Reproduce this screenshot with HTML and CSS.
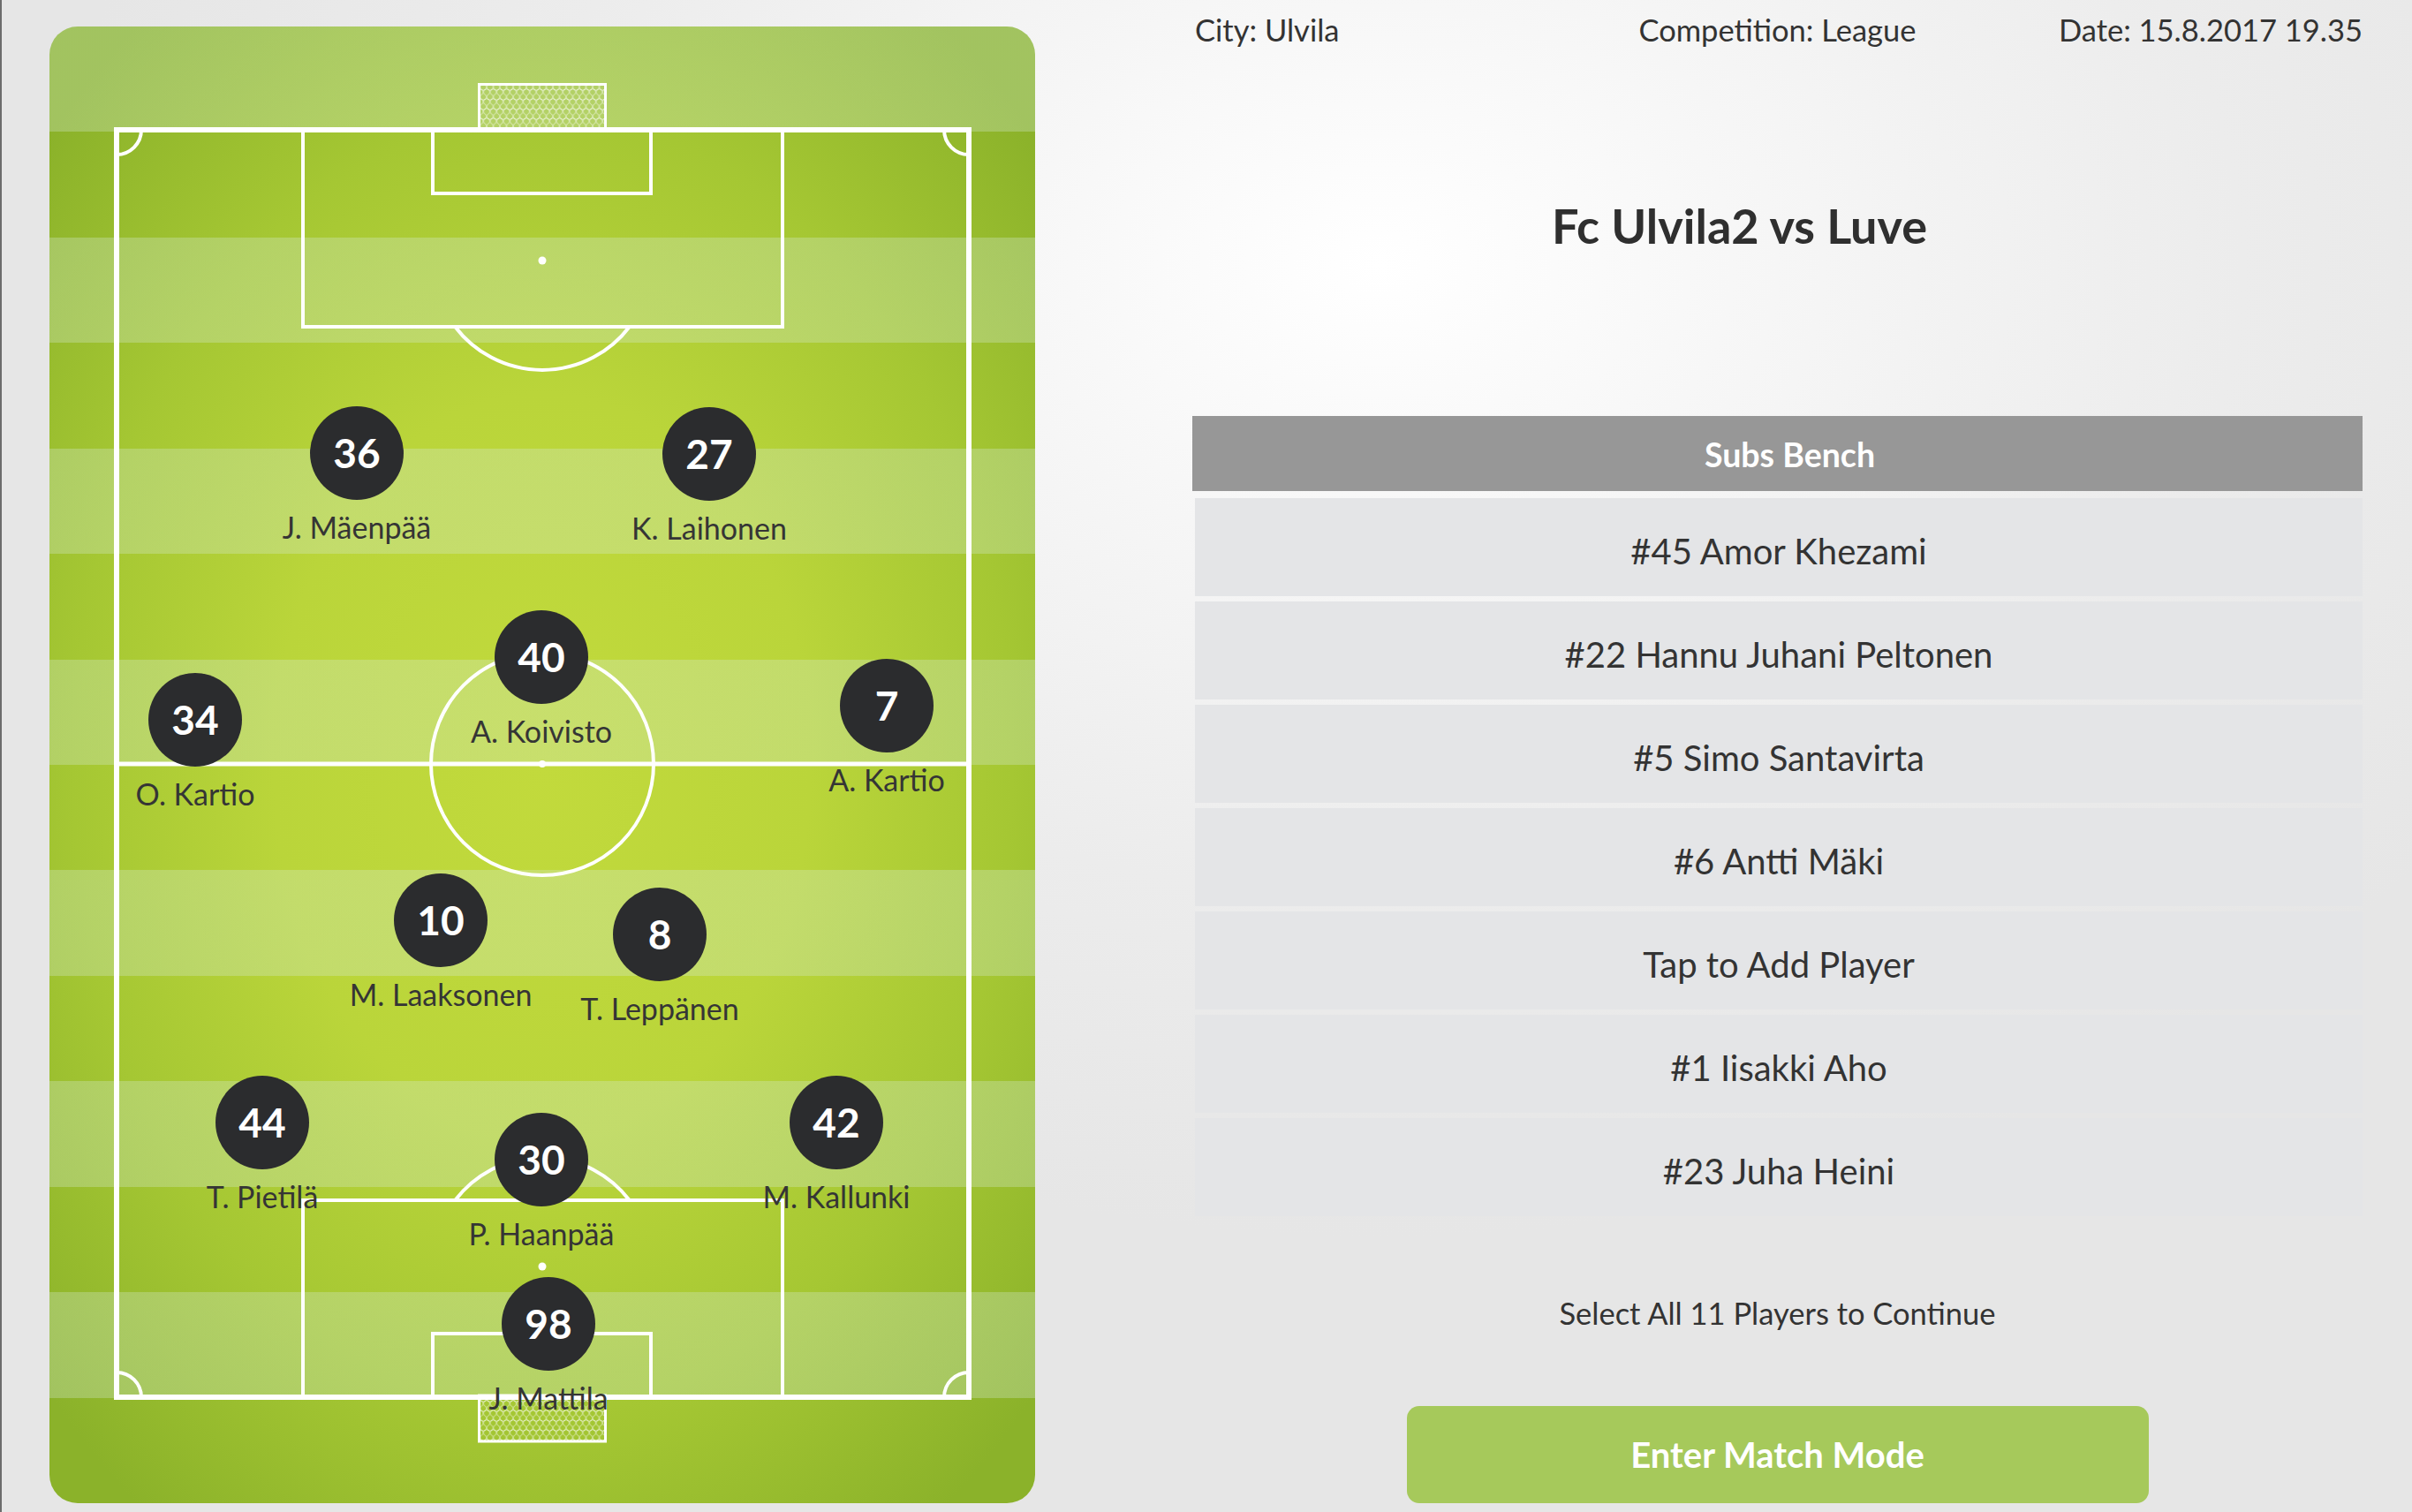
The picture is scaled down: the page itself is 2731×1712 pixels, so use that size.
FILE: index.html
```html
<!DOCTYPE html>
<html lang="fi">
<head>
<meta charset="utf-8">
<title>Lineup</title>
<link rel="stylesheet" href="styles.css">
</head>
<body>
<div class="screen">
  <section class="pitch">
    <svg class="pitch-lines" viewBox="0 0 1116 1672" width="1116" height="1672">
      <defs>
        <pattern id="net" width="7.5" height="11" patternUnits="userSpaceOnUse">
          <ellipse cx="3.75" cy="2.75" rx="3.4" ry="3.6"/>
          <ellipse cx="0" cy="8.25" rx="3.4" ry="3.6"/>
          <ellipse cx="7.5" cy="8.25" rx="3.4" ry="3.6"/>
        </pattern>
      </defs>
      <rect class="net" x="486.5" y="65.5" width="143" height="52"/>
      <rect class="net" x="486.5" y="1550" width="143" height="52"/>
      <g class="ln">
        <rect x="76" y="117" width="965" height="1435" class="outer"/>
        <line x1="76" y1="835" x2="1041" y2="835" class="half"/>
        <circle cx="558" cy="835" r="126"/>
        <path d="M287 117 V340 H830 V117"/>
        <path d="M434 117 V189 H681 V117"/>
        <path d="M459.3 340 A124 124 0 0 0 656.7 340"/>
        <path d="M287 1552 V1329 H830 V1552"/>
        <path d="M434 1552 V1480 H681 V1552"/>
        <path d="M459.3 1329 A124 124 0 0 1 656.7 1329"/>
        <path d="M76 145 A28 28 0 0 0 104 117"/>
        <path d="M1013 117 A28 28 0 0 0 1041 145"/>
        <path d="M76 1524 A28 28 0 0 1 104 1552"/>
        <path d="M1013 1552 A28 28 0 0 1 1041 1524"/>
      </g>
      <g class="spot">
        <circle cx="558" cy="835" r="4"/>
        <circle cx="558" cy="265" r="4.5"/>
        <circle cx="558" cy="1404" r="4.5"/>
      </g>
    </svg>

    <div class="player" style="--x:348px;--y:483px"><div class="num">36</div><div class="name">J. Mäenpää</div></div>
    <div class="player" style="--x:747px;--y:484px"><div class="num">27</div><div class="name">K. Laihonen</div></div>
    <div class="player" style="--x:557px;--y:714px"><div class="num">40</div><div class="name">A. Koivisto</div></div>
    <div class="player" style="--x:165px;--y:785px"><div class="num">34</div><div class="name">O. Kartio</div></div>
    <div class="player" style="--x:948px;--y:769px"><div class="num">7</div><div class="name">A. Kartio</div></div>
    <div class="player" style="--x:443px;--y:1012px"><div class="num">10</div><div class="name">M. Laaksonen</div></div>
    <div class="player" style="--x:691px;--y:1028px"><div class="num">8</div><div class="name">T. Leppänen</div></div>
    <div class="player" style="--x:241px;--y:1241px"><div class="num">44</div><div class="name">T. Pietilä</div></div>
    <div class="player" style="--x:557px;--y:1283px"><div class="num">30</div><div class="name">P. Haanpää</div></div>
    <div class="player" style="--x:891px;--y:1241px"><div class="num">42</div><div class="name">M. Kallunki</div></div>
    <div class="player" style="--x:565px;--y:1469px"><div class="num">98</div><div class="name">J. Mattila</div></div>
  </section>

  <main class="panel">
    <div class="meta">
      <span class="meta-city">City: Ulvila</span>
      <span class="meta-comp">Competition: League</span>
      <span class="meta-date">Date: 15.8.2017 19.35</span>
    </div>
    <h1 class="title">Fc Ulvila2 vs Luve</h1>
    <div class="bench">
      <div class="bench-head">Subs Bench</div>
      <ul class="bench-list">
        <li>#45 Amor Khezami</li>
        <li>#22 Hannu Juhani Peltonen</li>
        <li>#5 Simo Santavirta</li>
        <li>#6 Antti Mäki</li>
        <li>Tap to Add Player</li>
        <li>#1 Iisakki Aho</li>
        <li>#23 Juha Heini</li>
      </ul>
    </div>
    <p class="hint">Select All 11 Players to Continue</p>
    <button class="cta" type="button">Enter Match Mode</button>
  </main>
</div>
</body>
</html>
```

FILE: styles.css
```css
html, body {
  margin: 0;
  padding: 0;
}

body {
  font-family: Lato, "Liberation Sans", sans-serif;
  color: #333;
}

.screen {
  width: 2731px;
  height: 1712px;
  box-sizing: border-box;
  border-left: 2px solid #6c6c6c;
  padding-left: 54px;
  display: flex;
  align-items: flex-start;
  overflow: hidden;
  background:
    radial-gradient(ellipse 1500px 1100px at 1560px 300px, #ffffff 0%, #f6f6f6 30%, #ececec 65%, #e6e6e6 100%);
}

/* ---------- pitch ---------- */
.pitch {
  position: relative;
  flex: none;
  width: 1116px;
  height: 1672px;
  margin-top: 30px;
  border-radius: 32px;
  overflow: hidden;
  background:
    repeating-linear-gradient(to bottom,
      rgba(215, 235, 220, 0.30) 0px,
      rgba(215, 235, 220, 0.30) 119.43px,
      rgba(215, 235, 220, 0) 119.43px,
      rgba(215, 235, 220, 0) 238.86px),
    radial-gradient(ellipse 760px 1050px at 50% 50%, #c2da3c 0%, #bad53a 40%, #a5c733 70%, #8bb22a 100%);
}

.pitch-lines {
  position: absolute;
  left: 0;
  top: 0;
}

.pitch-lines pattern ellipse {
  fill: none;
  stroke: rgba(255, 255, 255, 0.55);
  stroke-width: 0.9;
}

.pitch-lines .net {
  fill: url(#net);
  stroke: #fff;
  stroke-width: 3;
}

.ln {
  fill: none;
  stroke: #fff;
  stroke-width: 4;
}

.ln .outer {
  stroke-width: 6;
}

.ln .half {
  stroke-width: 5;
}

.spot circle {
  fill: #fff;
}

.player {
  position: absolute;
  left: var(--x);
  top: calc(var(--y) - 53px);
  width: 0;
  display: flex;
  flex-direction: column;
  align-items: center;
}

.num {
  flex: none;
  width: 106px;
  height: 106px;
  border-radius: 50%;
  background: #2b2c2e;
  color: #fff;
  font-weight: 700;
  font-size: 46px;
  line-height: 106px;
  text-align: center;
}

.name {
  margin-top: 12px;
  white-space: nowrap;
  font-size: 34px;
  line-height: 38px;
  color: #353535;
}

/* ---------- right panel ---------- */
.panel {
  flex: none;
  width: 1325px;
  margin-left: 178px;
  display: flex;
  flex-direction: column;
}

.meta {
  margin-top: 14px;
  display: grid;
  grid-template-columns: 1fr 1fr 1fr;
  font-size: 34.5px;
  line-height: 40px;
  color: #333;
}

.meta-city { text-align: left; padding-left: 3px; }
.meta-comp { text-align: center; }
.meta-date { text-align: right; }

.title {
  margin: 170px 0 0 0;
  padding-right: 86px;
  text-align: center;
  font-size: 54px;
  line-height: 64px;
  font-weight: 700;
  color: #2f2f2f;
}

.bench {
  margin-top: 183px;
}

.bench-head {
  height: 85px;
  background: #979797;
  color: #fff;
  font-weight: 700;
  font-size: 37.5px;
  display: flex;
  align-items: center;
  justify-content: center;
  padding-left: 28px;
  padding-top: 2px;
  box-sizing: border-box;
}

.bench-list {
  list-style: none;
  margin: 8px 0 0 3px;
  padding: 0;
  display: flex;
  flex-direction: column;
  gap: 6px;
}

.bench-list li {
  height: 111px;
  box-sizing: border-box;
  padding-top: 8px;
  background: #e4e5e7;
  display: flex;
  align-items: center;
  justify-content: center;
  font-size: 40px;
  color: #333;
}

.hint {
  margin: 90px 0 0 0;
  text-align: center;
  font-size: 34.5px;
  line-height: 40px;
  color: #333;
}

.cta {
  align-self: center;
  margin-top: 85px;
  width: 840px;
  height: 110px;
  border: none;
  border-radius: 14px;
  background: #a6c95b;
  color: #fff;
  font-family: Lato, "Liberation Sans", sans-serif;
  font-weight: 700;
  font-size: 40px;
  padding: 0;
}
```
